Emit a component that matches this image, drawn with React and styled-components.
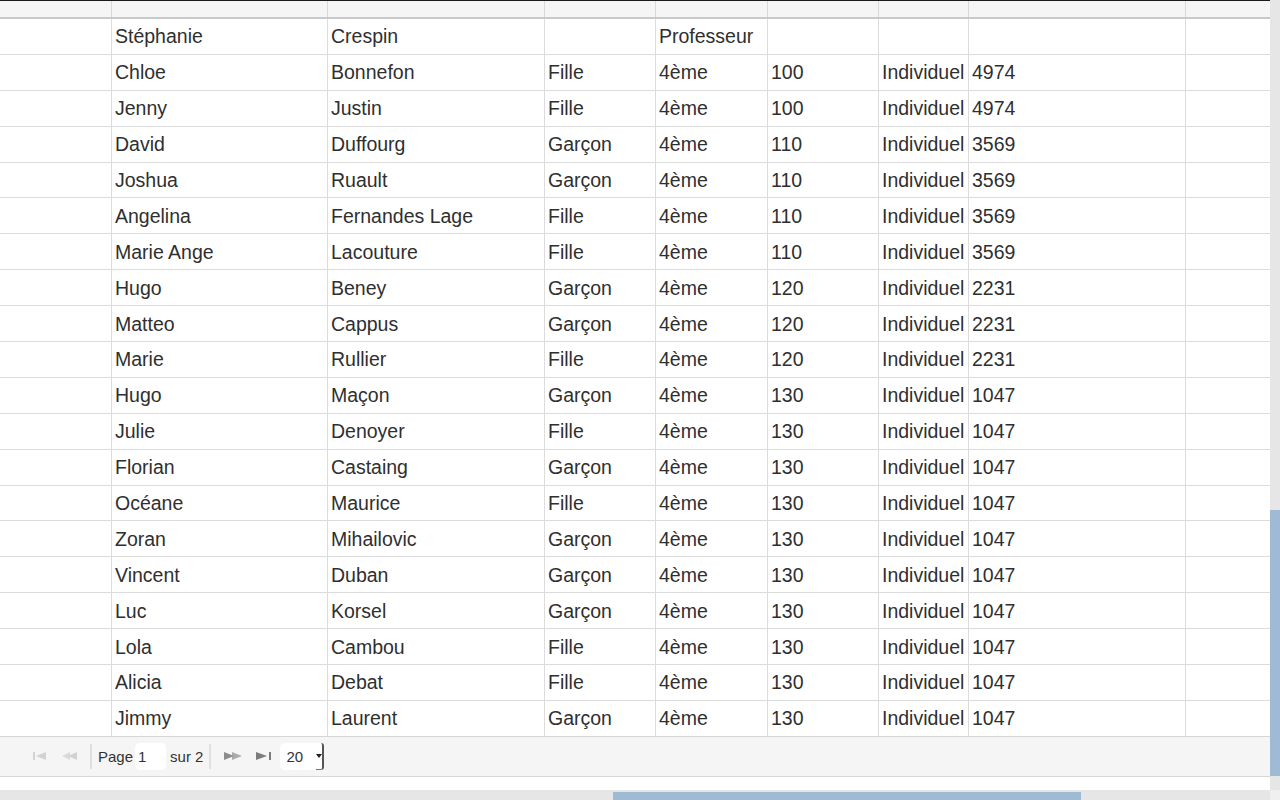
import React from 'react';
import styled, { createGlobalStyle } from 'styled-components';

const GlobalStyle = createGlobalStyle`
  html, body {
    margin: 0;
    padding: 0;
    background: #fff;
  }
  body {
    font-family: "Liberation Sans", Arial, sans-serif;
    color: #333;
  }
`;

const COLUMNS = '111px 216px 217px 111px 112px 111px 90px 217px 85px';

const rows = [
  ['', 'Stéphanie', 'Crespin', '', 'Professeur', '', '', '', ''],
  ['', 'Chloe', 'Bonnefon', 'Fille', '4ème', '100', 'Individuel', '4974', ''],
  ['', 'Jenny', 'Justin', 'Fille', '4ème', '100', 'Individuel', '4974', ''],
  ['', 'David', 'Duffourg', 'Garçon', '4ème', '110', 'Individuel', '3569', ''],
  ['', 'Joshua', 'Ruault', 'Garçon', '4ème', '110', 'Individuel', '3569', ''],
  ['', 'Angelina', 'Fernandes Lage', 'Fille', '4ème', '110', 'Individuel', '3569', ''],
  ['', 'Marie Ange', 'Lacouture', 'Fille', '4ème', '110', 'Individuel', '3569', ''],
  ['', 'Hugo', 'Beney', 'Garçon', '4ème', '120', 'Individuel', '2231', ''],
  ['', 'Matteo', 'Cappus', 'Garçon', '4ème', '120', 'Individuel', '2231', ''],
  ['', 'Marie', 'Rullier', 'Fille', '4ème', '120', 'Individuel', '2231', ''],
  ['', 'Hugo', 'Maçon', 'Garçon', '4ème', '130', 'Individuel', '1047', ''],
  ['', 'Julie', 'Denoyer', 'Fille', '4ème', '130', 'Individuel', '1047', ''],
  ['', 'Florian', 'Castaing', 'Garçon', '4ème', '130', 'Individuel', '1047', ''],
  ['', 'Océane', 'Maurice', 'Fille', '4ème', '130', 'Individuel', '1047', ''],
  ['', 'Zoran', 'Mihailovic', 'Garçon', '4ème', '130', 'Individuel', '1047', ''],
  ['', 'Vincent', 'Duban', 'Garçon', '4ème', '130', 'Individuel', '1047', ''],
  ['', 'Luc', 'Korsel', 'Garçon', '4ème', '130', 'Individuel', '1047', ''],
  ['', 'Lola', 'Cambou', 'Fille', '4ème', '130', 'Individuel', '1047', ''],
  ['', 'Alicia', 'Debat', 'Fille', '4ème', '130', 'Individuel', '1047', ''],
  ['', 'Jimmy', 'Laurent', 'Garçon', '4ème', '130', 'Individuel', '1047', ''],
];

const Frame = styled.div`
  width: 1280px;
  height: 800px;
  display: grid;
  grid-template-columns: 1270px 10px;
  grid-template-rows: 790px 10px;
  overflow: hidden;
`;

const Main = styled.div`
  display: flex;
  flex-direction: column;
  border-top: 1px solid #1a1a1a;
  overflow: hidden;
`;

const HeaderRow = styled.div`
  display: grid;
  grid-template-columns: ${COLUMNS};
  height: 16px;
  flex-shrink: 0;
  background: #f5f5f5;
  border-bottom: 2px solid #c9c9c9;
`;

const HeaderCell = styled.div`
  border-left: ${({ first }) => (first ? 'none' : '1px solid #d9d9d9')};
`;

const Body = styled.div`
  display: flex;
  flex-direction: column;
  flex-shrink: 0;
`;

const Row = styled.div`
  display: grid;
  grid-template-columns: ${COLUMNS};
  height: 35.9px;
  box-sizing: border-box;
  border-bottom: 1px solid #dcdcdc;
`;

const Cell = styled.div`
  box-sizing: border-box;
  border-left: ${({ first }) => (first ? 'none' : '1px solid #dcdcdc')};
  padding-left: 3px;
  padding-top: 1px;
  display: flex;
  align-items: center;
  font-size: 19.5px;
  color: #2f2f2f;
  white-space: nowrap;
  overflow: hidden;
`;

const Pager = styled.div`
  display: flex;
  align-items: center;
  flex-shrink: 0;
  height: 39px;
  background: #f5f5f5;
  border-top: 1px solid #d6d6d6;
  border-bottom: 1px solid #d6d6d6;
  margin-top: -1px;
  padding-left: 33px;
  font-size: 15px;
  color: #333;
`;

const IconButton = styled.div`
  display: flex;
  align-items: center;
  margin-right: ${({ gap }) => gap || 0}px;
`;

const Separator = styled.div`
  width: 2px;
  height: 25px;
  background: #e0e0e0;
  margin: 0 ${({ right }) => right || 6}px 0 ${({ left }) => left || 0}px;
`;

const Label = styled.span`
  margin-right: ${({ gap }) => gap || 0}px;
`;

const PageInput = styled.div`
  width: 31px;
  height: 27px;
  box-sizing: border-box;
  background: #fff;
  border-radius: 5px;
  padding-left: 3px;
  display: flex;
  align-items: center;
  margin-right: 4px;
`;

const Combo = styled.div`
  display: flex;
  align-items: stretch;
  height: 27px;
`;

const ComboField = styled.div`
  width: 36px;
  box-sizing: border-box;
  background: #fff;
  border-radius: 5px 0 0 5px;
  padding-left: 6px;
  display: flex;
  align-items: center;
`;

const ComboTrigger = styled.div`
  width: 8px;
  box-sizing: border-box;
  background: #fff;
  border-right: 2px solid #555;
  border-bottom: 1px solid #777;
  border-radius: 0 3px 3px 0;
  display: flex;
  align-items: center;
  justify-content: center;
`;

const Filler = styled.div`
  flex: 1;
  background: #fff;
`;

const VTrack = styled.div`
  background: #e6e6e6;
  display: flex;
  flex-direction: column;
`;

const VThumb = styled.div`
  margin-top: 510px;
  height: 266px;
  background: #9fbad4;
`;

const HTrack = styled.div`
  background: #e6e6e6;
  display: flex;
  align-items: flex-end;
`;

const HThumb = styled.div`
  margin-left: 613px;
  width: 468px;
  height: 8px;
  background: #9fbad4;
`;

const Corner = styled.div`
  background: #f0f0f0;
`;

const First = ({ color }) => (
  <svg width="14" height="10" viewBox="0 0 14 10">
    <rect x="0" y="1" width="2" height="8" fill={color} />
    <path d="M3 5 L13 1 L13 9 Z" fill={color} />
  </svg>
);

const Prev = ({ color }) => (
  <svg width="16" height="10" viewBox="0 0 16 10">
    <path d="M0 5 L8 1 L8 9 Z" fill={color} opacity="0.75" />
    <path d="M6 5 L15 1 L15 9 Z" fill={color} />
  </svg>
);

const Next = ({ color }) => (
  <svg width="18" height="10" viewBox="0 0 18 10">
    <path d="M0 1 L10 5 L0 9 Z" fill={color} />
    <path d="M8 1 L18 5 L8 9 Z" fill={color} opacity="0.7" />
  </svg>
);

const Last = ({ color }) => (
  <svg width="16" height="10" viewBox="0 0 16 10">
    <path d="M0 1 L11 5 L0 9 Z" fill={color} />
    <rect x="13" y="1" width="2" height="8" fill={color} />
  </svg>
);

const Arrow = () => (
  <svg width="6" height="4" viewBox="0 0 6 4">
    <path d="M0 0 L6 0 L3 4 Z" fill="#222" />
  </svg>
);

const App = () => {
  return (
    <Frame>
      <GlobalStyle />
      <Main>
        <HeaderRow>
          {rows[0].map((_, i) => (
            <HeaderCell key={i} first={i === 0} />
          ))}
        </HeaderRow>
        <Body>
          {rows.map((row, r) => (
            <Row key={r}>
              {row.map((value, c) => (
                <Cell key={c} first={c === 0}>{value}</Cell>
              ))}
            </Row>
          ))}
        </Body>
        <Pager>
          <IconButton gap={15}><First color="#d2d2d2" /></IconButton>
          <IconButton><Prev color="#d2d2d2" /></IconButton>
          <Separator left={12} right={6} />
          <Label gap={2}>Page</Label>
          <PageInput>1</PageInput>
          <Label>sur 2</Label>
          <Separator left={6} right={13} />
          <IconButton gap={14}><Next color="#8c8c8c" /></IconButton>
          <IconButton gap={8}><Last color="#7c7c7c" /></IconButton>
          <Combo>
            <ComboField>20</ComboField>
            <ComboTrigger><Arrow /></ComboTrigger>
          </Combo>
        </Pager>
        <Filler />
      </Main>
      <VTrack>
        <VThumb />
      </VTrack>
      <HTrack>
        <HThumb />
      </HTrack>
      <Corner />
    </Frame>
  );
};

export default App;
